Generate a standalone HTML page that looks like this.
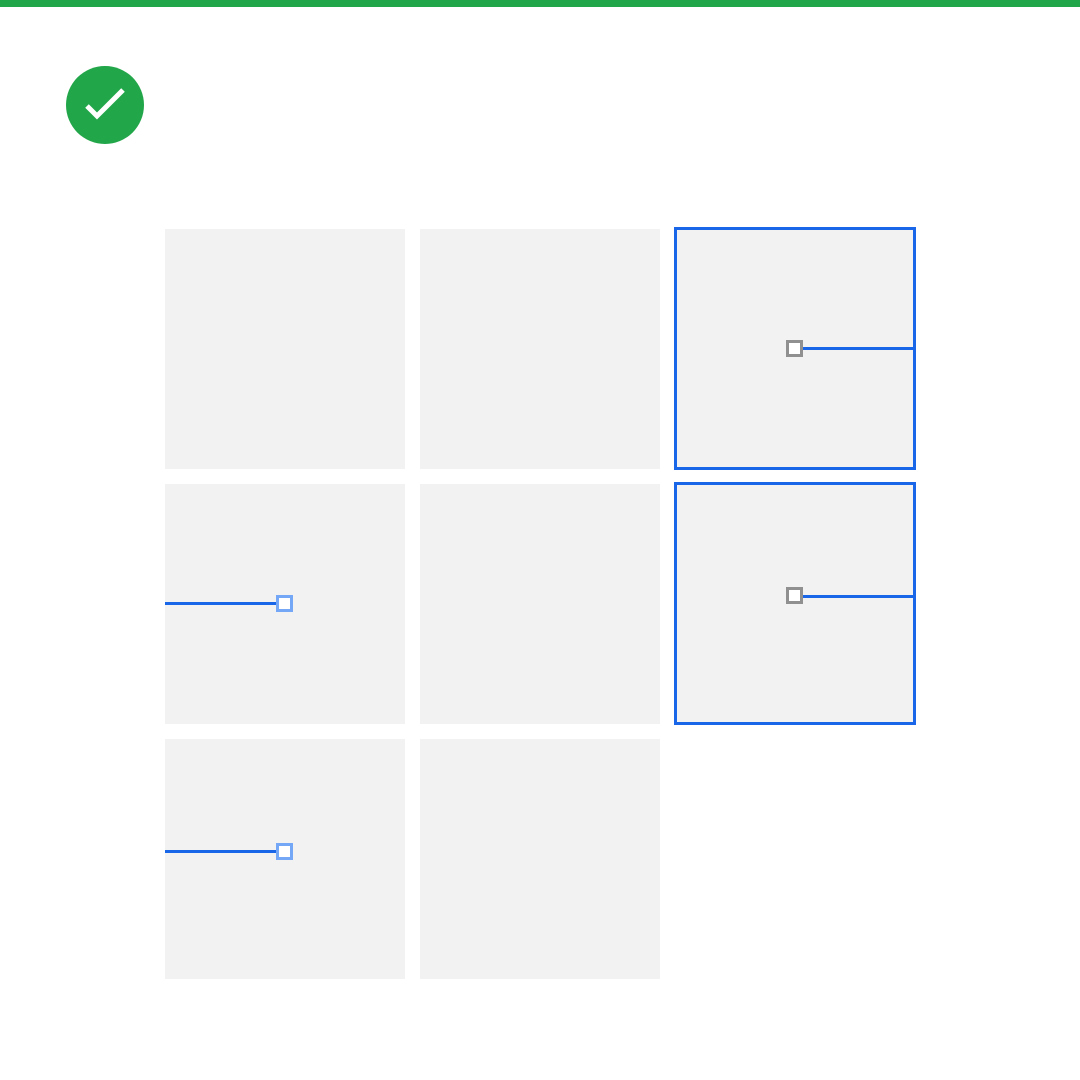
<!DOCTYPE html>
<html><head><style>
body{margin:0;width:1080px;height:1080px;background:#fff;position:relative;overflow:hidden}
div{position:absolute;box-sizing:border-box}
.c{width:240px;height:240px;background:#f2f2f2}
.sel{border:3px solid #1a66e8}
.ln{height:3px;background:#1a66e8}
.sq{width:17px;height:17px;background:#fff;border:3px solid #909090}
.sqb{border-color:#74a7f6}
</style></head><body>
<div style="left:0;top:0;width:1080px;height:7px;background:#22a64a"></div>
<svg style="position:absolute;left:66px;top:66px" width="78" height="78"><circle cx="39" cy="39" r="39" fill="#22a64a"/><path d="M21 40 L31 50 L57 24" stroke="#fff" stroke-width="5" fill="none"/></svg>
<div class="c" style="left:165px;top:229px"></div>
<div class="c" style="left:420px;top:229px"></div>
<div class="c sel" style="left:674px;top:227px;width:242px;height:243px"></div>
<div class="c" style="left:165px;top:484px"></div>
<div class="c" style="left:420px;top:484px"></div>
<div class="c sel" style="left:674px;top:482px;width:242px;height:243px"></div>
<div class="c" style="left:165px;top:739px"></div>
<div class="c" style="left:420px;top:739px"></div>
<div class="ln" style="left:802px;top:347px;width:112px"></div>
<div class="sq" style="left:786px;top:340px"></div>
<div class="ln" style="left:802px;top:595px;width:112px"></div>
<div class="sq" style="left:786px;top:587px"></div>
<div class="ln" style="left:165px;top:602px;width:112px"></div>
<div class="sq sqb" style="left:276px;top:595px"></div>
<div class="ln" style="left:165px;top:850px;width:112px"></div>
<div class="sq sqb" style="left:276px;top:843px"></div>
</body></html>
